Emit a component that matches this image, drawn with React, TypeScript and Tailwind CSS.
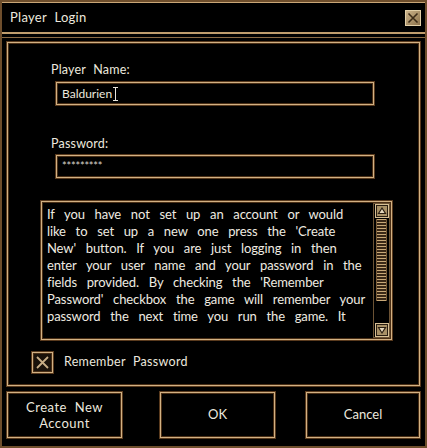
import React from 'react';

const frame =
  'border border-[#d2b183] shadow-[0_0_0_1px_#5a3b1e,inset_0_0_0_1px_#4a2f16]';

const lines = [
  'If you have not set up an account or would',
  "like to set up a new one press the 'Create",
  "New' button. If you are just logging in then",
  'enter your user name and your password in the',
  "fields provided. By checking the 'Remember",
  "Password' checkbox the game will remember your",
  'password the next time you run the game. It',
];

function CloseBox() {
  return (
    <svg width="16" height="16" viewBox="0 0 16 16">
      <defs>
        <linearGradient id="cb" x1="0" y1="0" x2="1" y2="1">
          <stop offset="0" stopColor="#cdb58c" />
          <stop offset="1" stopColor="#8a7049" />
        </linearGradient>
      </defs>
      <rect x="0.5" y="0.5" width="15" height="15" fill="url(#cb)" stroke="#e2cfa8" />
      <path d="M3.5 3.5 L12.5 12.5 M12.5 3.5 L3.5 12.5" stroke="#3b2b18" strokeWidth="1.6" />
    </svg>
  );
}

function Arrow({ up }: { up?: boolean }) {
  return (
    <svg width="14" height="14" viewBox="0 0 14 14">
      <rect x="0.5" y="0.5" width="13" height="13" fill="#2a1e12" stroke="#d7bf94" />
      <rect x="2" y="2" width="10" height="10" fill="#a89066" />
      <path
        d={up ? 'M3.5 9.5 L7 4 L10.5 9.5 Z' : 'M3.5 4.5 L7 10 L10.5 4.5 Z'}
        fill="#e4d7bd"
        stroke="#2a1e12"
        strokeWidth="1.2"
      />
    </svg>
  );
}

export default function App() {
  return (
    <div
      className="w-[427px] h-[448px] bg-black flex flex-col border-2 border-[#6e4e2c] text-[#ece8de] overflow-hidden"
      style={{ fontFamily: 'Lato, "Open Sans", sans-serif' }}
    >
      {/* title bar */}
      <div className="h-[32px] shrink-0 flex items-center justify-between pl-[8px] pr-[4px] border-t border-[#c9a677] border-b-2 border-b-[#bf9c6c]">
        <span className="text-[13px] tracking-[0.3px] [word-spacing:4px]">Player Login</span>
        <CloseBox />
      </div>

      <div className="flex-1 flex flex-col mt-[3px] border-t border-[#8a6a44] px-[5px] pt-[4px]">
        {/* main panel */}
        <div className={`h-[344px] flex flex-col ${frame}`}>
          <div className="ml-[43px] mt-[19px] h-[16px] text-[12.5px] leading-[16px] tracking-[0.2px] [word-spacing:4px]">
            Player Name:
          </div>
          <div className={`ml-[48px] mt-[4px] w-[318px] h-[23px] flex items-center pl-[5px] text-[12px] ${frame}`}>
            <span>Baldurien</span>
            <svg width="5" height="14" viewBox="0 0 5 14" className="ml-[1px]">
              <path d="M0 0.5 H5 M0 13.5 H5 M2.5 0.5 V13.5" stroke="#e8e4da" strokeWidth="1" />
            </svg>
          </div>

          <div className="ml-[43px] mt-[31px] h-[16px] text-[12.5px] leading-[16px] tracking-[0.2px]">Password:</div>
          <div className={`ml-[48px] mt-[3px] w-[318px] h-[23px] flex items-center pl-[5px] text-[11px] tracking-[-0.2px] text-[#d8d4ca] ${frame}`}>
            *********
          </div>

          {/* info text box */}
          <div className={`ml-[33px] mt-[23px] w-[351px] h-[139px] flex ${frame}`}>
            <div className="flex-1 overflow-hidden pl-[5px] pt-[4px] text-[13px] leading-[17px] tracking-[-0.1px] [word-spacing:6.5px] text-[#efebe1] whitespace-nowrap">
              {lines.map((l) => (
                <div key={l}>{l}</div>
              ))}
            </div>
            <div className="w-[17px] my-[1px] mr-[1px] flex flex-col items-center border border-[#6b5234]">
              <Arrow up />
              <div className="mt-[1px] w-[11px] h-[82px] bg-[repeating-linear-gradient(to_bottom,#c8a878_0px,#c8a878_1px,#3a2817_1px,#3a2817_3px)] border-x border-[#7a5c38]" />
              <div className="flex-1" />
              <Arrow />
            </div>
          </div>

          {/* remember password */}
          <div className="mt-[12px] ml-[24px] flex items-center gap-[11px]">
            <div className={`w-[21px] h-[21px] flex items-center justify-center bg-[#1a120a] ${frame}`}>
              <svg width="15" height="15" viewBox="0 0 15 15">
                <path d="M2 2 L13 13 M13 2 L2 13" stroke="#c7ad86" strokeWidth="1.8" />
              </svg>
            </div>
            <span className="text-[12.5px] tracking-[0.3px] [word-spacing:4px]">Remember Password</span>
          </div>
        </div>

        {/* buttons */}
        <div className="mt-[6px] flex h-[46px]">
          <div className={`w-[115px] flex flex-col items-center justify-center text-[13px] leading-[16px] tracking-[0.5px] [word-spacing:4px] ${frame}`}>
            <span>Create New</span>
            <span>Account</span>
          </div>
          <div className={`ml-[38px] w-[115px] flex items-center justify-center text-[13px] ${frame}`}>OK</div>
          <div className={`ml-[31px] w-[114px] flex items-center justify-center text-[13px] ${frame}`}>Cancel</div>
        </div>
      </div>
    </div>
  );
}
